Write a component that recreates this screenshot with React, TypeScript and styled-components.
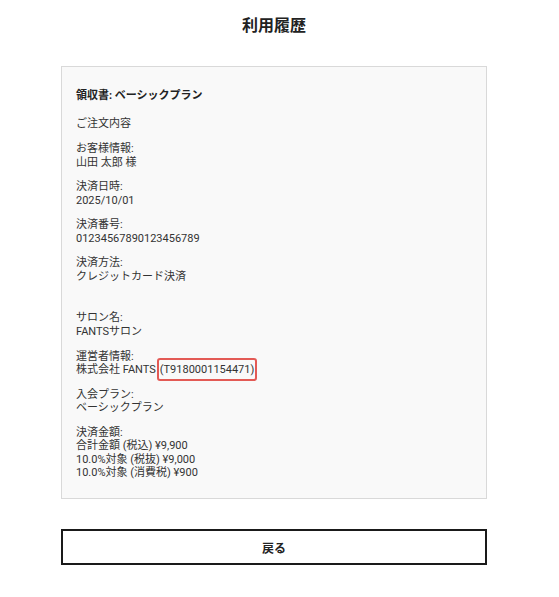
import React from 'react';
import styled, { createGlobalStyle } from 'styled-components';

const GlobalStyle = createGlobalStyle`
  html, body {
    margin: 0;
    padding: 0;
    background: #ffffff;
  }
  body {
    font-family: Roboto, "Noto Sans CJK JP", sans-serif;
    color: #333333;
  }
`;

const Page = styled.div`
  width: 426px;
  padding: 16px 0 30px 61px;
`;

const Title = styled.h1`
  margin: 0 0 30px;
  font-size: 16px;
  line-height: 20px;
  font-weight: 700;
  text-align: center;
  color: #222222;
`;

const Receipt = styled.section`
  background: #f9f9f9;
  border: 1px solid #d9d9d9;
  padding: 22px 14px 19px;
`;

const Heading = styled.h2`
  margin: 0 0 15px;
  font-size: 11px;
  line-height: 13.4px;
  font-weight: 700;
  color: #222222;
`;

const Block = styled.div<{ $after?: number }>`
  margin-bottom: ${({ $after }) => ($after ?? 11.3)}px;
  font-size: 11px;
  line-height: 13.4px;

  &:last-child {
    margin-bottom: 0;
  }
`;

const Line = styled.div``;

// red outline around the invoice registration number
const Highlight = styled.span`
  margin-left: 1px;
  padding: 3px 1px;
  border: 2px solid #e35a55;
  border-radius: 3px;
`;

const BackButton = styled.button`
  display: block;
  width: 100%;
  height: 36px;
  margin-top: 30px;
  background: #ffffff;
  border: 2px solid #1a1a1a;
  font-family: inherit;
  font-size: 12px;
  font-weight: 700;
  color: #222222;
  cursor: pointer;
`;

type Field = {
  label: string;
  lines: React.ReactNode[];
  after?: number;
};

const fields: Field[] = [
  { label: 'お客様情報:', lines: ['山田 太郎 様'] },
  { label: '決済日時:', lines: ['2025/10/01'] },
  { label: '決済番号:', lines: ['01234567890123456789'] },
  { label: '決済方法:', lines: ['クレジットカード決済'], after: 28.2 },
  { label: 'サロン名:', lines: ['FANTSサロン'] },
  {
    label: '運営者情報:',
    lines: [
      <>
        株式会社 FANTS<Highlight>(T9180001154471)</Highlight>
      </>,
    ],
  },
  { label: '入会プラン:', lines: ['ベーシックプラン'] },
  {
    label: '決済金額:',
    lines: ['合計金額 (税込) ¥9,900', '10.0%対象 (税抜) ¥9,000', '10.0%対象 (消費税) ¥900'],
  },
];

export default function App() {
  return (
    <>
      <GlobalStyle />
      <Page>
        <Title>利用履歴</Title>
        <Receipt>
          <Heading>領収書: ベーシックプラン</Heading>
          <Block>ご注文内容</Block>
          {fields.map((f) => (
            <Block key={f.label} $after={f.after}>
              <Line>{f.label}</Line>
              {f.lines.map((l, i) => (
                <Line key={i}>{l}</Line>
              ))}
            </Block>
          ))}
        </Receipt>
        <BackButton type="button">戻る</BackButton>
      </Page>
    </>
  );
}
